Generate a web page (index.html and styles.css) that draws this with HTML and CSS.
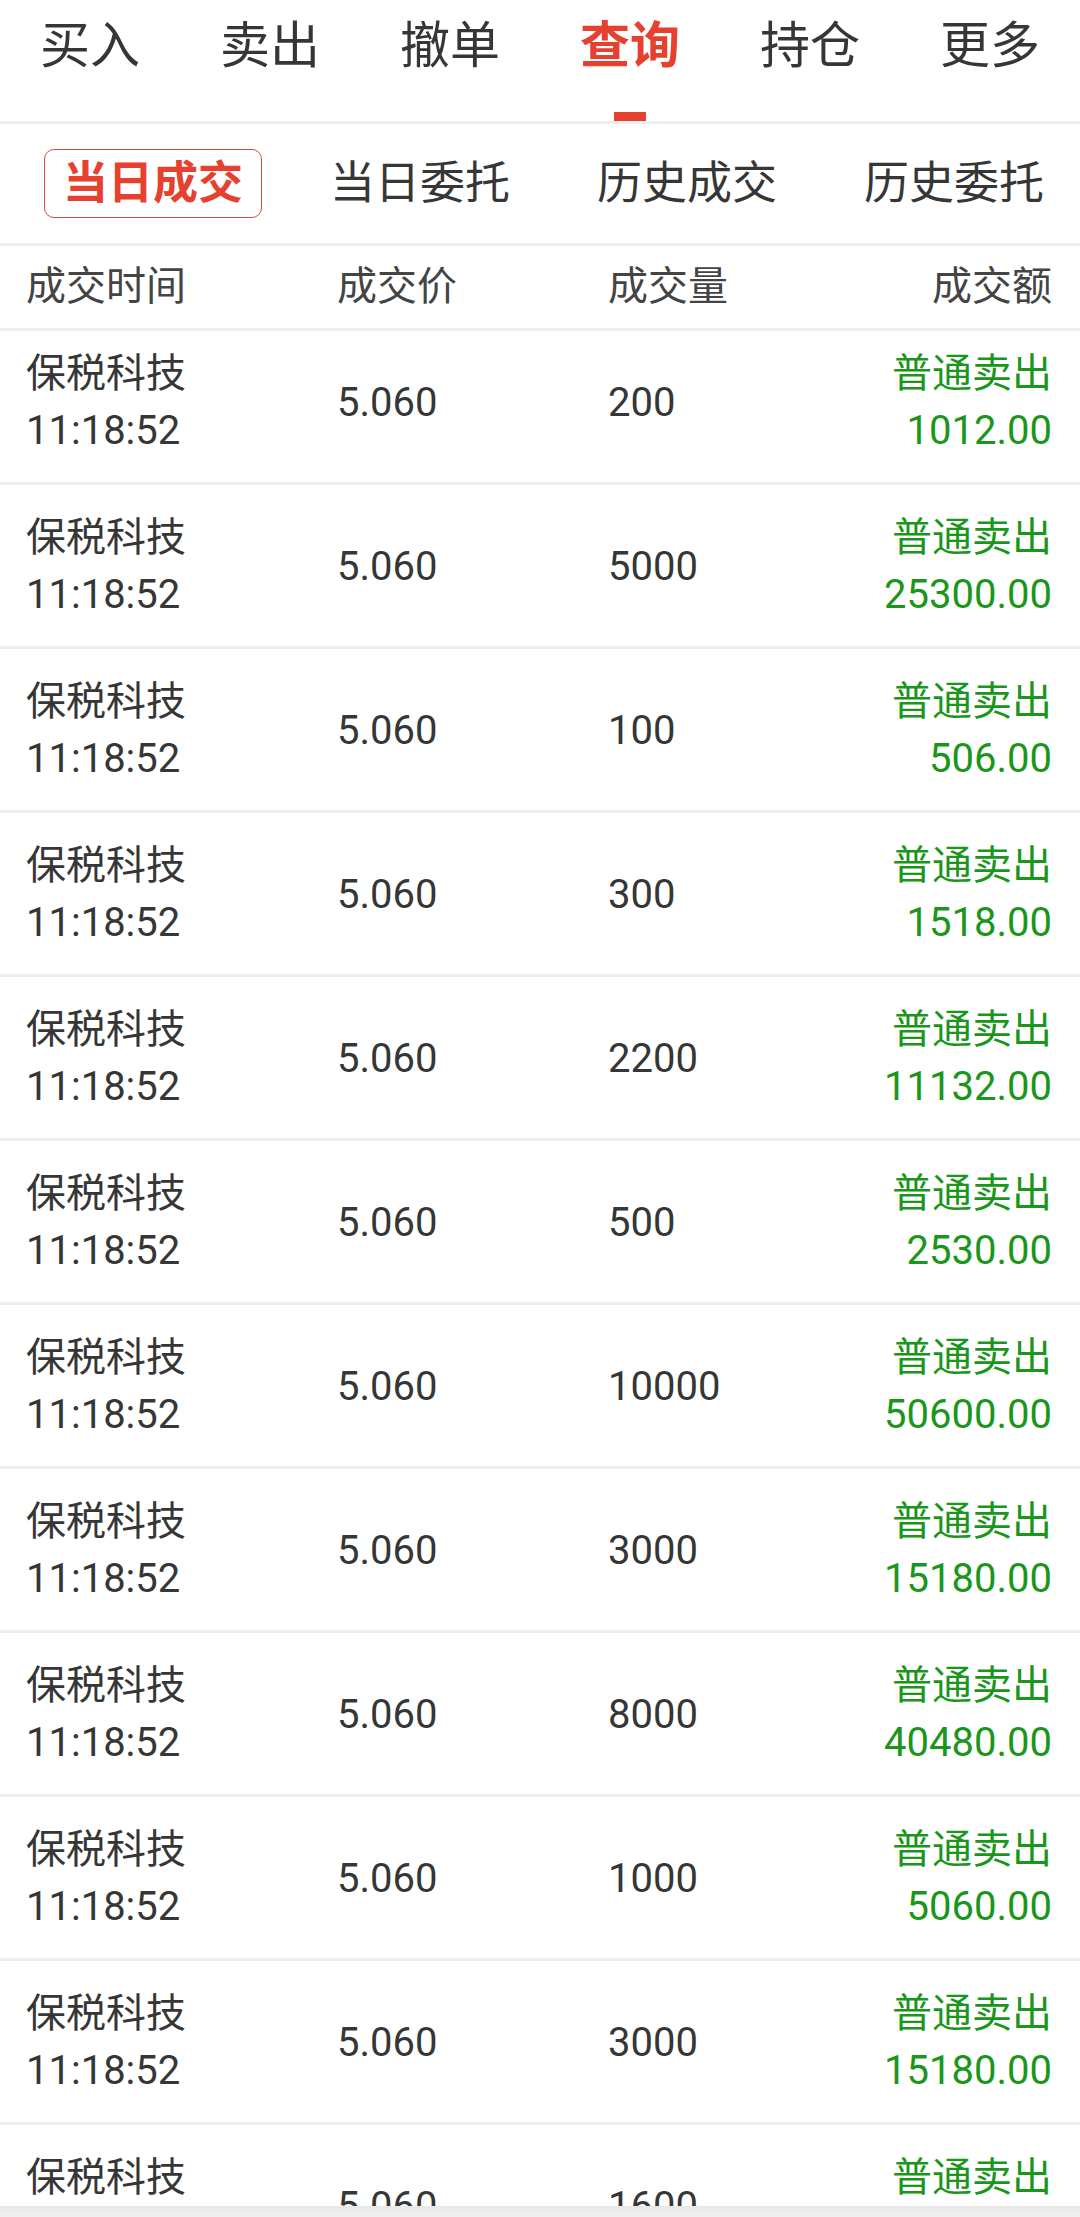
FILE: index.html
```html
<!DOCTYPE html>
<html lang="zh-CN">
<head>
  <meta charset="UTF-8">
  <meta name="viewport" content="width=device-width, initial-scale=1.0">
  <title>查询 | 当日成交</title>
  <link rel="stylesheet" href="styles.css">
</head>
<body>
  <div class="page">
    <!-- Top trade tabs -->
    <div class="top-tabs">
      <div class="tab"><span class="tab-label">买入</span></div>
      <div class="tab"><span class="tab-label">卖出</span></div>
      <div class="tab"><span class="tab-label">撤单</span></div>
      <div class="tab active"><span class="tab-label">查询</span><i class="tab-mark"></i></div>
      <div class="tab"><span class="tab-label">持仓</span></div>
      <div class="tab"><span class="tab-label">更多</span></div>
    </div>

    <!-- Query sub tabs -->
    <div class="sub-tabs">
      <div class="sub-tab active">当日成交</div>
      <div class="sub-tab">当日委托</div>
      <div class="sub-tab">历史成交</div>
      <div class="sub-tab">历史委托</div>
    </div>

    <!-- Column header -->
    <div class="list-head">
      <div>成交时间</div>
      <div>成交价</div>
      <div>成交量</div>
      <div class="right">成交额</div>
    </div>

    <!-- Deal rows -->
    <div class="list">
      <div class="row">
        <div><div>保税科技</div><div>11:18:52</div></div>
        <div>5.060</div>
        <div>200</div>
        <div class="amount"><div>普通卖出</div><div>1012.00</div></div>
      </div>
      <div class="row">
        <div><div>保税科技</div><div>11:18:52</div></div>
        <div>5.060</div>
        <div>5000</div>
        <div class="amount"><div>普通卖出</div><div>25300.00</div></div>
      </div>
      <div class="row">
        <div><div>保税科技</div><div>11:18:52</div></div>
        <div>5.060</div>
        <div>100</div>
        <div class="amount"><div>普通卖出</div><div>506.00</div></div>
      </div>
      <div class="row">
        <div><div>保税科技</div><div>11:18:52</div></div>
        <div>5.060</div>
        <div>300</div>
        <div class="amount"><div>普通卖出</div><div>1518.00</div></div>
      </div>
      <div class="row">
        <div><div>保税科技</div><div>11:18:52</div></div>
        <div>5.060</div>
        <div>2200</div>
        <div class="amount"><div>普通卖出</div><div>11132.00</div></div>
      </div>
      <div class="row">
        <div><div>保税科技</div><div>11:18:52</div></div>
        <div>5.060</div>
        <div>500</div>
        <div class="amount"><div>普通卖出</div><div>2530.00</div></div>
      </div>
      <div class="row">
        <div><div>保税科技</div><div>11:18:52</div></div>
        <div>5.060</div>
        <div>10000</div>
        <div class="amount"><div>普通卖出</div><div>50600.00</div></div>
      </div>
      <div class="row">
        <div><div>保税科技</div><div>11:18:52</div></div>
        <div>5.060</div>
        <div>3000</div>
        <div class="amount"><div>普通卖出</div><div>15180.00</div></div>
      </div>
      <div class="row">
        <div><div>保税科技</div><div>11:18:52</div></div>
        <div>5.060</div>
        <div>8000</div>
        <div class="amount"><div>普通卖出</div><div>40480.00</div></div>
      </div>
      <div class="row">
        <div><div>保税科技</div><div>11:18:52</div></div>
        <div>5.060</div>
        <div>1000</div>
        <div class="amount"><div>普通卖出</div><div>5060.00</div></div>
      </div>
      <div class="row">
        <div><div>保税科技</div><div>11:18:52</div></div>
        <div>5.060</div>
        <div>3000</div>
        <div class="amount"><div>普通卖出</div><div>15180.00</div></div>
      </div>
      <div class="row">
        <div><div>保税科技</div><div>11:18:52</div></div>
        <div>5.060</div>
        <div>1600</div>
        <div class="amount"><div>普通卖出</div><div>8096.00</div></div>
      </div>
    </div>
  </div>

  <!-- bottom system bar -->
  <div class="bottom-bar"></div>
</body>
</html>
```

FILE: styles.css
```css
body {
  margin: 0;
  padding: 0;
  background-color: #fff;
  color: #363636;
  font-family: Roboto, "Noto Sans CJK SC", sans-serif;
}
.page {
  width: 1080px;
  height: 100vh;
  overflow: hidden;
}
.top-tabs {
  display: grid;
  grid-template-columns: repeat(6, 1fr);
  height: 121px;
  border-bottom: 3px solid #eeeeee;
}
.tab {
  display: flex;
  flex-direction: column;
  align-items: center;
  justify-content: space-between;
  padding-top: 11px;
  font-size: 50px;
  line-height: 70px;
  color: #363636;
}
.tab.active {
  color: #e6412f;
  font-weight: bold;
}
.tab-mark {
  display: block;
  width: 32px;
  height: 9px;
  background-color: #e6412f;
}
.sub-tabs {
  display: flex;
  align-items: center;
  gap: 49px;
  height: 119px;
  padding-left: 44px;
  border-bottom: 3px solid #eeeeee;
}
.sub-tab {
  padding: 0 18px;
  border: 1px solid transparent;
  border-radius: 10px;
  font-size: 45px;
  line-height: 67px;
  color: #363636;
}
.sub-tab.active {
  border-color: #dc4a3e;
  color: #e6412f;
  font-weight: bold;
}
.list-head,
.row {
  display: grid;
  grid-template-columns: 311px 271px 1fr auto;
  padding: 0 28px 0 26px;
  border-bottom: 3px solid #eeeeee;
  font-size: 40px;
}
.list-head {
  height: 82px;
  line-height: 82px;
  color: #444;
}
.right {
  text-align: right;
}
.row {
  align-items: center;
  padding-top: 24px;
  padding-bottom: 23px;
  line-height: 57px;
}
.row:first-child {
  padding-top: 14px;
}
.amount {
  text-align: right;
  color: #1a961a;
}
.bottom-bar {
  position: fixed;
  left: 0;
  right: 0;
  bottom: 0;
  height: 11px;
  background: linear-gradient(#e8e8e8, #f0f0f0);
}
```
